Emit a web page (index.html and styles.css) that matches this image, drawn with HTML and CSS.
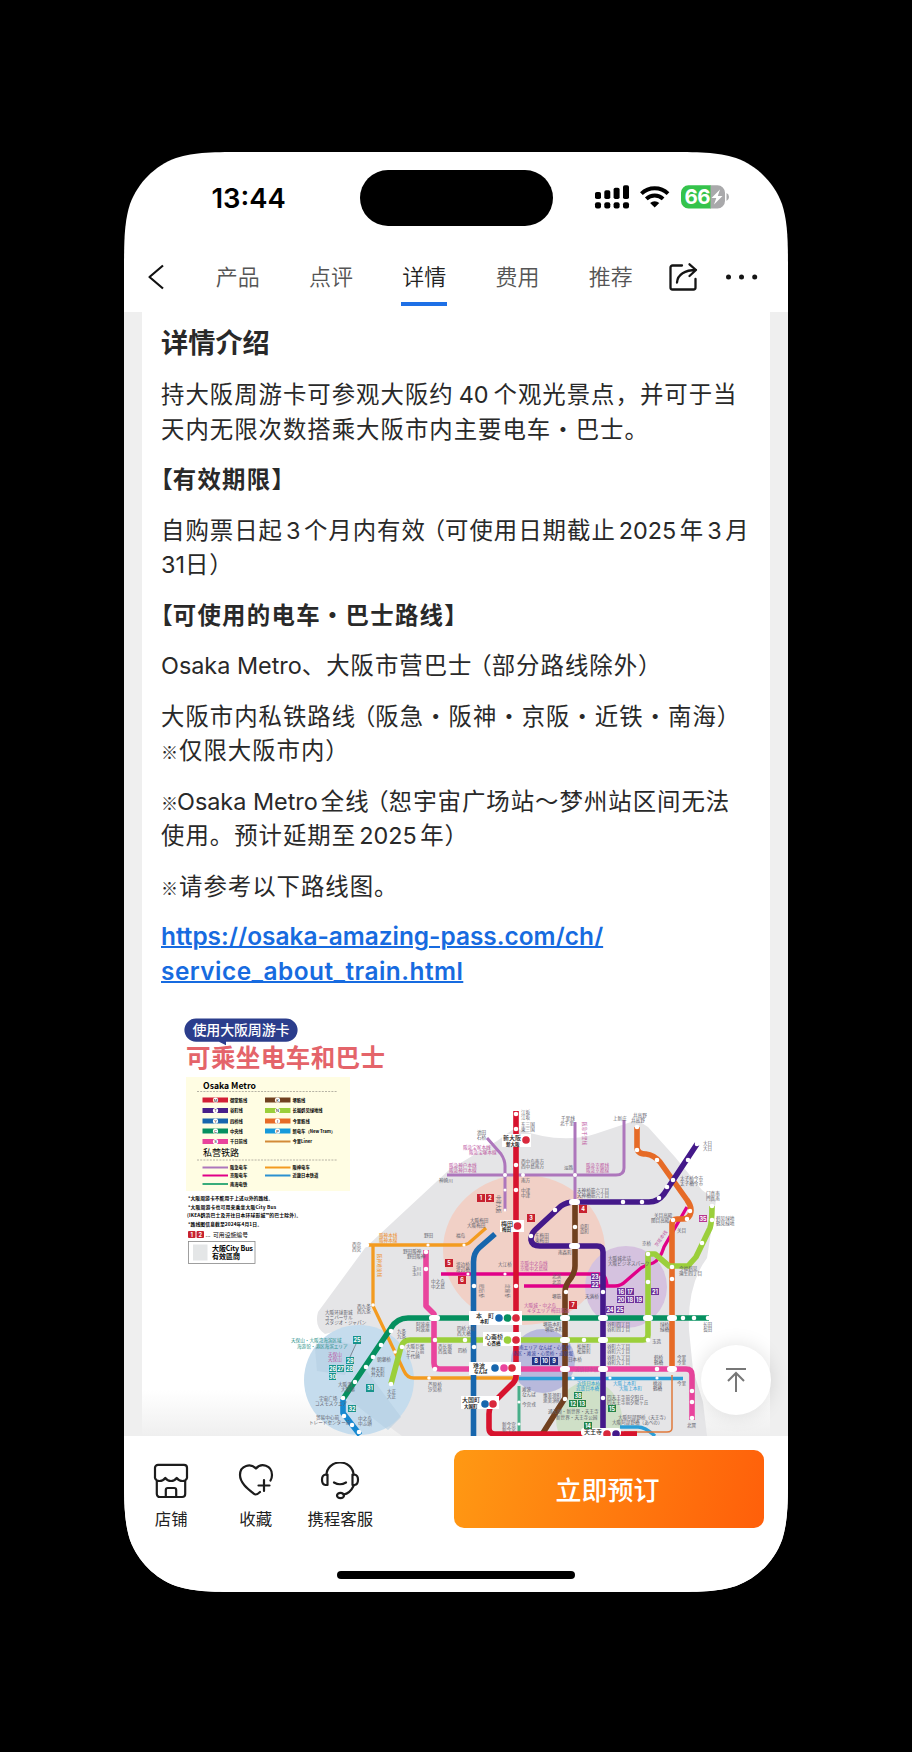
FILE: index.html
```html
<!DOCTYPE html>
<html lang="zh-CN">
<head>
<meta charset="utf-8">
<title>详情</title>
<link rel="stylesheet" href="styles.css">
</head>
<body>
<main class="phone">
  <header class="status">
    <span class="time">13:44</span>
    <span class="island"></span>
    <svg class="signals" viewBox="0 0 138 26" width="138" height="26">
      <g fill="#000">
        <rect x="1" y="8" width="6" height="7" rx="1.8"/><rect x="10.300" y="6.300" width="6" height="8.700" rx="1.8"/><rect x="19.600" y="3.800" width="6" height="11.200" rx="1.8"/><rect x="29" y="1.300" width="6" height="13.700" rx="1.8"/>
        <rect x="1" y="18.300" width="6" height="6.200" rx="2"/><rect x="10.300" y="18.300" width="6" height="6.200" rx="2"/><rect x="19.600" y="18.300" width="6" height="6.200" rx="2"/><rect x="29" y="18.300" width="6" height="6.200" rx="2"/>
        <path d="M60.700 23.500l-4.600-4.500a7 7 0 0 1 9.200 0z"/>
      </g>
      <g fill="none" stroke="#000" stroke-width="3.900"><path d="M47.400 9.600a19.200 19.200 0 0 1 26.600 0"/><path d="M52.300 14.900a12.200 12.200 0 0 1 16.800 0"/></g>
      <path d="M94.500 1.300H117V24.500H94.500a7.500 7.500 0 0 1-7.500-7.500V8.800a7.500 7.500 0 0 1 7.500-7.500z" fill="#35c34c"/>
      <path d="M116.500 1.300h7a7.500 7.500 0 0 1 7.500 7.500V17a7.500 7.500 0 0 1-7.500 7.500h-7z" fill="#a9a9ab"/>
      <path d="M132.500 9q2.500 1.200 2.500 4t-2.500 4z" fill="#a9a9ab"/>
      <text x="90.500" y="20" class="batt" textLength="26">66</text>
      <path d="M126 5.500l-8.500 8.500h4.800l-2.300 6.500 8.500-8.600h-4.700z" fill="#fff"/>
    </svg>
  </header>
  <nav class="nav">
    <svg class="back" viewBox="0 0 18 28" width="18" height="28"><path d="M16 2.500L2.500 14 16 25.500" fill="none" stroke="#111" stroke-width="2.200" stroke-linejoin="round"/></svg>
    <div class="tabs"><span>产品</span><span>点评</span><span class="active">详情</span><span>费用</span><span>推荐</span></div>
    <svg class="share" viewBox="0 0 30 30" width="30" height="30" fill="none" stroke="#151515" stroke-width="2.300" stroke-linecap="round" stroke-linejoin="round"><path d="M14 3.500H4.500a2 2 0 0 0-2 2v20a2 2 0 0 0 2 2h21a2 2 0 0 0 2-2V17"/><path d="M9 20.500c.5-8 8-12.500 19-12.500M21.500 2.300l6.500 5.700-6.500 6"/></svg>
    <svg class="more" viewBox="0 0 34 8" width="34" height="8" fill="#151515"><circle cx="4.500" cy="4" r="2.500"/><circle cx="17.500" cy="4" r="2.500"/><circle cx="30.700" cy="4" r="2.500"/></svg>
  </nav>
  <section class="scroll">
    <article class="card">
      <div class="copy">
        <h1>详情介绍</h1>
        <p>持大阪周游卡可参观大阪约<span class="num wide">40</span>个观光景点，并可于当<br>天内无限次数搭乘大阪市内主要电车・巴士。</p>
        <p><b><span class="br">【</span>有效期限<span class="br">】</span></b></p>
        <p>自购票日起<span class="num">3</span>个月内有效<span class="open">（</span>可使用日期截止<span class="num">2025</span>年<span class="num">3</span>月<br><span class="lat">31</span>日<span class="close">）</span></p>
        <p><b><span class="br">【</span>可使用的电车・巴士路线<span class="br">】</span></b></p>
        <p><span class="lat">Osaka Metro</span>、大阪市营巴士<span class="open">（</span>部分路线除外<span class="close">）</span></p>
        <p>大阪市内私铁路线<span class="open">（</span>阪急・阪神・京阪・近铁・南海<span class="close">）</span><br><span class="mark">※</span>仅限大阪市内<span class="close">）</span></p>
        <p><span class="mark tight">※</span><span class="lat">Osaka Metro</span><span class="after">全</span>线<span class="open">（</span>恕宇宙广场站～梦州站区间无法<br>使用。预计延期至<span class="num">2025</span>年<span class="close">）</span></p>
        <p><span class="mark">※</span>请参考以下路线图。</p>
        <p class="link"><a>https://osaka-amazing-pass.com/ch/<br><span class="second">service_about_train.html</span></a></p>
      </div>
      <svg class="map" viewBox="142 1000 628 436" width="628" height="436">
        <defs><linearGradient id="base" x1="0" y1="0" x2="0" y2="1"><stop offset="0" stop-color="#fff"/><stop offset="1" stop-color="#efefef"/></linearGradient></defs>
        <rect x="142" y="1390" width="628" height="46" fill="url(#base)"/>
        <!-- land and visitor zones -->
        <path d="M318 1312L365 1248L449 1170L497 1141L515 1128Q560 1145 595 1134L637 1120L648 1127L675 1157L702 1190L716 1200L707 1258Q687 1285 689 1330L693 1370L703 1402L707 1436H402L380 1420L350 1328L325 1334Q314 1327 318 1312Z" fill="#e5e5e7"/>
        <ellipse cx="524" cy="1250" rx="81" ry="75" fill="#f1d0c6"/>
        <circle cx="626" cy="1287" r="41" fill="#d5c2df"/>
        <circle cx="543" cy="1361" r="32" fill="#b8b9dc"/>
        <ellipse cx="589" cy="1419" rx="33" ry="38" fill="#cfe0c7"/>
        <circle cx="359" cy="1380" r="55" fill="#c5dced"/>
        <path d="M315 1348l18-8 22 5-10 30-28-4zM366 1370l35 47-13 13-45-35z" fill="#b4cee3" opacity=".6"/>
        <!-- private railways -->
        <g fill="none" stroke="#ad76bc" stroke-width="3"><path d="M447 1175H616Q624 1175 624 1168V1120M575 1122V1202M487 1138L501 1154Q505 1160 505 1166V1211"/></g>
        <path d="M519 1386V1436" fill="none" stroke="#48ae89" stroke-width="3"/>
        <path d="M441 1274H600Q606 1274 607 1286M524 1286H615Q621 1286 626 1281L641 1268Q646 1265 653 1263Q660 1260 664 1247L687 1207" fill="none" stroke="#e00088" stroke-width="3.300"/>
        <path d="M486 1228L469 1243Q466 1245 460 1245H366M373 1245V1306L404 1371Q407 1378 414 1378H519" fill="none" stroke="#f39b20" stroke-width="3.300"/>
        <path d="M519 1378.500H683M620 1427H638Q645 1427 655 1436" fill="none" stroke="#2b9ed8" stroke-width="3.300"/>
        <path d="M672 1375V1428Q672 1432 667 1432H624" fill="none" stroke="#df7a3d" stroke-width="1.500"/>
        <!-- metro lines -->
        <g fill="none" stroke-width="5.600" stroke-linejoin="round">
          <path d="M637 1127V1147Q637 1154 646 1154Q654 1155 660 1162L687 1200Q693 1208 690 1215Q688 1219 683 1219H677Q672 1219 672 1224V1372" stroke="#e66b27"/>
          <path d="M391 1384L401 1347Q403 1340 410 1340H643Q648 1340 648 1335V1254H655L669 1266H688L696 1257L710 1228Q712 1222 712 1206" stroke="#9bcf3b"/>
          <path d="M426 1250V1306L434 1314V1363Q434 1369 440 1369H686Q692 1369 692 1375V1420" stroke="#e9449d"/>
          <path d="M343 1399L391 1328Q397 1318 408 1318H709" stroke="#05905f"/>
          <path d="M343 1399V1413L360 1435" stroke="#1689d1"/>
          <path d="M495 1234L479 1248Q473.500 1253 473.500 1262V1436" stroke="#1766ad"/>
          <path d="M575 1204V1266Q575 1272 571 1278Q565 1285 565 1292V1398L541 1436" stroke="#70401f"/>
          <path d="M697 1144L664 1194Q658 1202 649 1202H574Q567 1202 561 1206L535 1230Q531 1234 531 1240Q532 1246 540 1246H597Q603 1246 603 1252V1436" stroke="#44198a"/>
          <path d="M516 1111V1376Q516 1381 511 1385L494 1402Q489 1407 489 1414V1428Q489 1434 495 1434H637" stroke="#d7132e"/>
        </g>
        <!-- stations -->
        <g stroke="#fff" stroke-width="4.600" stroke-linecap="round" fill="none">
          <path d="M516 1114h0M516 1129h0M516 1165h0M516 1190h0M516 1286h0M637 1127h0M637 1150h0M657 1160h0M673 1180h0M690 1211h0M687 1219h0M673 1220h0M672 1267h0M672 1279h0M688 1160h0M697 1144h0M667 1187h0M659 1198h0M642 1202h0M623 1202h0M555 1210h0M531 1236h0M575 1227h0M566 1292h0M565 1399h0M603 1292h0M603 1398h0M648 1282h0M648 1254h0M702 1243h0M712 1220h0M712 1206h0M648 1340h0M584 1340h0M683 1318h0M694 1318h0M708 1318h0M426 1252h0M426 1269h0M692 1391h0M692 1402h0M692 1418h0M657 1369h0M367 1245h0M391 1331h0M381 1345h0M373 1357h0M366 1367h0M355 1382h0M343 1398h0M402 1347h0M391 1384h0M465 1340h0M474 1347h0M435 1340h0M435 1369h0M474 1286h0M344 1416h0M352 1425h0M359 1432h0"/>
          <path d="M572 1202h5M572 1246h5M432 1318h5M563 1318h4M601 1318h4M646 1318h4M670 1318h4M563 1340h4M601 1340h4M563 1369h4M601 1369h4M670 1369h4" stroke-width="6"/>
        </g>
        <g fill="#fff"><circle cx="505" cy="1175" r="2"/><circle cx="523" cy="1175" r="2"/><circle cx="575" cy="1175" r="2"/><circle cx="505" cy="1190" r="1.500"/><circle cx="505" cy="1210" r="1.500"/><circle cx="428" cy="1245" r="1.600"/><circle cx="464" cy="1245" r="1.600"/><circle cx="468" cy="1274" r="1.600"/><circle cx="505" cy="1274" r="1.600"/><circle cx="373" cy="1305" r="1.800"/><circle cx="395" cy="1352" r="1.800"/><circle cx="429" cy="1378" r="1.800"/><circle cx="573" cy="1378" r="1.600"/><circle cx="610" cy="1378" r="1.600"/><circle cx="657" cy="1378" r="1.600"/><circle cx="519" cy="1402" r="1.600"/><circle cx="519" cy="1424" r="1.600"/>
          <rect x="502" y="1134" width="29" height="13"/><rect x="500" y="1220" width="24" height="12"/><rect x="469" y="1311" width="53" height="14"/><rect x="483" y="1332" width="38" height="14"/><rect x="469" y="1362" width="52" height="13"/><rect x="461" y="1396" width="38" height="13"/><rect x="581" y="1428" width="40" height="8" rx="3"/></g>
        <g class="hub"><text x="503" y="1140">新大阪</text><text x="501" y="1226">梅田</text><text x="476" y="1318">本　町</text><text x="485" y="1339">心斋桥</text><text x="473" y="1368">难波</text><text x="462" y="1402">大国町</text><text x="584" y="1434">天王寺</text></g>
        <g class="hub-sub"><text x="506" y="1145.500">新大阪</text><text x="502" y="1231">梅田</text><text x="480" y="1323">本町</text><text x="487" y="1344.500">心斎橋</text><text x="474" y="1373">なんば</text><text x="464" y="1407.500">大国町</text></g>
        <g stroke-width="7.600" stroke-linecap="round"><path d="M526 1140h0M517.500 1226h0M516 1318h0M516 1340h0M512 1368h0M493 1404h0M607 1434h0" stroke="#d9283c"/><path d="M499 1318h0M495 1368h0M485 1404h0" stroke="#1766ad"/><path d="M507.500 1318h0" stroke="#05905f"/><path d="M507.500 1340h0" stroke="#9bcf3b"/><path d="M504 1368h0" stroke="#e9449d"/><path d="M616 1434h0" stroke="#44198a"/></g>
        <g class="tiny">
          <text x="521" y="1114">江坂</text><text x="521" y="1118.500">江坂</text><text x="521" y="1126">东三国</text><text x="521" y="1130.500">東三国</text><text x="477" y="1134">池田</text><text x="477" y="1138.500">石桥</text><text x="521" y="1163">西中岛南方</text><text x="521" y="1167.500">西中島南方</text><text x="439" y="1182">神崎川</text><text x="521" y="1182">南方</text><text x="521" y="1192">中津</text><text x="521" y="1197">中津</text><text x="470" y="1222">大阪梅田</text><text x="467" y="1227">大阪梅田</text><text x="424" y="1237">野田</text><text x="456" y="1237">福岛</text><text x="561" y="1120">千里线</text><text x="560" y="1125">北千里</text><text x="564" y="1169">淡路</text><text x="633" y="1117">井高野</text><text x="631" y="1122">井高野</text><text x="613" y="1120">上新庄</text><text x="703" y="1145">大日</text><text x="703" y="1149.500">大日</text><text x="680" y="1180">太子桥今市</text><text x="680" y="1185">太子橋今市</text><text x="577" y="1192">天神桥筋六丁目</text><text x="577" y="1197">天神橋筋六丁目</text><text x="580" y="1228">扇町</text><text x="580" y="1233">扇町</text><text x="558" y="1254">南森町</text><text x="535" y="1237">东梅田</text><text x="535" y="1242">東梅田</text><text x="706" y="1195">门真南</text><text x="706" y="1200">門真南</text><text x="716" y="1220">鹤见绿地</text><text x="716" y="1225">鶴見緑地</text><text x="654" y="1217">关目高殿</text><text x="651" y="1222">関目高殿</text><text x="677" y="1232">关目</text><text x="642" y="1245">京桥</text><text x="608" y="1260">大阪城北诘</text><text x="608" y="1265">大阪ビジネスパーク</text><text x="679" y="1270">今福鹤见</text><text x="679" y="1275">蒲生四丁目</text><text x="352" y="1246">西宫</text><text x="352" y="1251">西宮</text><text x="403" y="1253">野田阪神</text><text x="407" y="1258">野田阪神</text><text x="412" y="1270">玉川</text><text x="412" y="1275">玉川</text><text x="431" y="1283">中之岛</text><text x="431" y="1288">中之島</text><text x="456" y="1266">渡边桥</text><text x="456" y="1271">渡辺橋</text><text x="498" y="1266">大江桥</text><text x="552" y="1278">北滨</text><text x="552" y="1284">北浜</text><text x="552" y="1298">堺筋</text><text x="585" y="1298">天满桥</text><text x="325" y="1314">大阪环球影城</text><text x="325" y="1319">ユニバーサル</text><text x="325" y="1324">スタジオ・ジャパン</text><text x="357" y="1308">西九条</text><text x="357" y="1313">西九条</text><text x="397" y="1333">九条</text><text x="397" y="1338">九条</text><text x="416" y="1326">阿波座</text><text x="416" y="1331">阿波座</text><text x="406" y="1348">大阪巨蛋</text><text x="406" y="1353">ドーム前</text><text x="406" y="1358">千代崎</text><text x="438" y="1348">西长堀</text><text x="438" y="1353">西長堀</text><text x="457" y="1330">四桥大桥</text><text x="457" y="1335">西大橋</text><text x="458" y="1352">四桥</text><text x="371" y="1371">弁天町</text><text x="371" y="1376">弁天町</text><text x="377" y="1361">朝潮桥</text><text x="338" y="1386">大阪港</text><text x="341" y="1391">大阪港</text><text x="319" y="1400">宇宙广场</text><text x="315" y="1405">コスモスクエア</text><text x="316" y="1419">贸易中心前</text><text x="309" y="1424">トレードセンター前</text><text x="358" y="1420">中之岛</text><text x="358" y="1425">中ふ頭</text><text x="387" y="1393">大正</text><text x="387" y="1398">大正</text><text x="428" y="1386">芦原桥</text><text x="428" y="1391">汐见桥</text><text x="543" y="1326">堺筋本町</text><text x="545" y="1331">堺筋本町</text><text x="607" y="1326">谷町四丁目</text><text x="607" y="1331">谷町四丁目</text><text x="660" y="1326">绿桥</text><text x="660" y="1331">緑橋</text><text x="703" y="1326">长田</text><text x="703" y="1331">長田</text><text x="577" y="1348">松屋町</text><text x="577" y="1353">松屋町</text><text x="607" y="1348">谷町六丁目</text><text x="607" y="1353">谷町六丁目</text><text x="652" y="1343">玉造</text><text x="607" y="1359">谷町九丁目</text><text x="607" y="1364">谷町九丁目</text><text x="654" y="1359">鹤桥</text><text x="654" y="1364">鶴橋</text><text x="677" y="1359">今里</text><text x="677" y="1364">今里</text><text x="653" y="1385">桃谷</text><text x="653" y="1390">鶴橋</text><text x="677" y="1385">今里</text><text x="522" y="1391">难波</text><text x="522" y="1396">なんば</text><text x="522" y="1406">今宫戎</text><text x="543" y="1397">惠美须町</text><text x="543" y="1402">恵美須町</text><text x="607" y="1399">四天王寺前夕阳丘</text><text x="607" y="1404">四天王寺前夕陽ヶ丘</text><text x="502" y="1426">新今宫</text><text x="502" y="1431">新今宮</text><text x="618" y="1419">大阪阿部野桥（天王寺）</text><text x="612" y="1424">大阪阿部野橋（あべの）</text><text x="687" y="1427">北巽</text><text x="548" y="1413">通天阁・新世界・天王寺</text><text x="556" y="1418.500">新世界・天王寺公园</text><text x="568" y="1361">日本桥</text>
          <g transform="rotate(90 480 1284)"><text x="480" y="1284">肥后桥</text></g><g transform="rotate(90 506 1284)"><text x="506" y="1284">淀屋桥</text></g><g transform="rotate(90 497 1195)"><text x="497" y="1195">中津大阪</text></g>
        </g>
        <g class="tiny accent"><text x="449" y="1167">阪急神户本线</text><text x="449" y="1171.500">阪急神戸本線</text><text x="463" y="1149">阪急宝冢本线</text><text x="469" y="1154">阪急宝塚本線</text><text x="586" y="1167">阪急京都线</text><text x="586" y="1171.500">阪急京都線</text><text x="520" y="1265">京阪中之岛线</text><text x="520" y="1270">京阪中之島線</text><text x="524" y="1307">大阪城・中之岛</text><text x="527" y="1312">キタエリア 梅田周边</text><text x="328" y="1356">天保山</text><text x="328" y="1361">天保山</text><text x="575" y="1371">近铁日本桥</text><g transform="rotate(90 583 1122)"><text x="583" y="1122">阪急千里线</text></g><g transform="rotate(-55 657 1247)"><text x="657" y="1247">京阪本线</text></g></g>
        <g class="tiny teal"><text x="291" y="1342">天保山・大阪湾海滨区域</text><text x="297" y="1348">海游馆・港区海滨エリア</text></g>
        <g class="tiny navy"><text x="519" y="1349">南エリア なんば・心斋桥</text><text x="513" y="1354.500">南区・难波・心斋桥・道顿堀</text></g>
        <g class="tiny sky"><text x="577" y="1385">近铁日本桥</text><text x="576" y="1390">近鉄日本橋</text><text x="613" y="1385">大阪上本町</text><text x="619" y="1390">大阪上本町</text></g>
        <g class="tiny orange"><text x="379" y="1237">阪神本线</text><text x="379" y="1241.500">阪神本線</text><g transform="rotate(90 378 1254)"><text x="378" y="1254">阪神难波线</text></g></g>
        <g class="plates">
          <g fill="#c72230"><rect x="477" y="1194" width="8" height="8"/><rect x="486" y="1194" width="8" height="8"/><rect x="527" y="1214" width="8" height="8"/><rect x="579" y="1205" width="8" height="8"/><rect x="445" y="1259" width="8" height="8"/><rect x="458" y="1276" width="8" height="8"/><rect x="569" y="1301" width="8" height="8"/></g>
          <g fill="#6e329b"><rect x="591" y="1273" width="8" height="7"/><rect x="591" y="1281" width="8" height="7"/><rect x="617" y="1288" width="8" height="7"/><rect x="626" y="1288" width="8" height="7"/><rect x="617" y="1296" width="8" height="7"/><rect x="626" y="1296" width="8" height="7"/><rect x="635" y="1296" width="8" height="7"/><rect x="651" y="1288" width="8" height="7"/><rect x="606" y="1306" width="8" height="7"/><rect x="616" y="1306" width="8" height="7"/></g>
          <g fill="#243483"><rect x="532" y="1357" width="8" height="8"/><rect x="541" y="1357" width="8" height="8"/><rect x="550" y="1357" width="8" height="8"/></g>
          <path d="M356 1344L350 1357" stroke="#55565d" stroke-width=".6"/>
          <g fill="#18938b"><rect x="353" y="1336" width="8" height="8"/><rect x="346" y="1357" width="8" height="7"/><rect x="329" y="1365" width="7" height="7"/><rect x="337" y="1365" width="7" height="7"/><rect x="346" y="1365" width="7" height="7"/><rect x="329" y="1373" width="7" height="7"/><rect x="366" y="1384" width="8" height="8"/><rect x="348" y="1405" width="8" height="7"/></g>
          <g fill="#218347"><rect x="574" y="1392" width="8" height="7"/><rect x="569" y="1400" width="8" height="7"/><rect x="578" y="1400" width="8" height="7"/><rect x="608" y="1405" width="8" height="7"/><rect x="584" y="1422" width="8" height="7"/></g>
          <rect x="699" y="1215" width="8" height="7" fill="#b8368f"/>
          <g class="plate"><text x="481" y="1200.300">1</text><text x="490" y="1200.300">2</text><text x="531" y="1220.300">3</text><text x="583" y="1211.300">4</text><text x="449" y="1265.300">5</text><text x="462" y="1282.300">6</text><text x="573" y="1307.300">7</text><text x="595" y="1279">23</text><text x="595" y="1287">22</text><text x="621" y="1294">16</text><text x="630" y="1294">17</text><text x="621" y="1302">20</text><text x="630" y="1302">18</text><text x="639" y="1302">19</text><text x="655" y="1294">21</text><text x="610" y="1312">24</text><text x="620" y="1312">25</text><text x="536" y="1363.300">8</text><text x="545" y="1363.300">10</text><text x="554" y="1363.300">9</text><text x="357" y="1342">25</text><text x="350" y="1363">29</text><text x="332.500" y="1371">26</text><text x="340.500" y="1371">27</text><text x="349.500" y="1371">28</text><text x="332.500" y="1379">30</text><text x="370" y="1390">31</text><text x="352" y="1411">32</text><text x="578" y="1398">38</text><text x="573" y="1406">12</text><text x="582" y="1406">13</text><text x="612" y="1411">15</text><text x="588" y="1428">14</text><text x="703" y="1221">35</text></g>
        </g>
        <!-- title -->
        <path d="M196 1018.500h90a11.500 11.500 0 0 1 0 23.200h-60v3.500l-7-3.500h-23a11.500 11.500 0 0 1 0-23.200z" fill="#2b3d8c"/>
        <text x="192.500" y="1034.500" class="pill-text" textLength="97">使用大阪周游卡</text>
        <text x="186" y="1066.500" class="map-title" textLength="199">可乘坐电车和巴士</text>
        <!-- legend -->
        <rect x="186" y="1077" width="164" height="114" fill="#fffde3"/>
        <text x="203" y="1088.500" class="legend-title" textLength="53" lengthAdjust="spacingAndGlyphs">Osaka Metro</text>
        <path d="M197 1091.500h140M197 1160h140" stroke="#a3a094" stroke-width=".8" stroke-dasharray="2 1.200"/>
        <g stroke-width="5"><path d="M202.500 1100h25.500" stroke="#d31f35"/><path d="M202.500 1110.500h25.500" stroke="#47208a"/><path d="M202.500 1121h25.500" stroke="#1766ad"/><path d="M202.500 1131h25.500" stroke="#05905f"/><path d="M202.500 1141.500h25.500" stroke="#e9449d"/><path d="M265 1100h25.500" stroke="#70401f"/><path d="M265 1110.500h25.500" stroke="#9bcf3b"/><path d="M265 1121h25.500" stroke="#e66b27"/><path d="M265 1131h25.500" stroke="#169adb"/></g>
        <g stroke-width="2"><path d="M265 1141.500h25.500" stroke="#d28a38"/><path d="M202.500 1167.500h25.500" stroke="#ad76bc"/><path d="M202.500 1175.500h25.500" stroke="#e00088"/><path d="M202.500 1184h25.500" stroke="#39ad7b"/><path d="M265 1167.500h25.500" stroke="#f39b20"/><path d="M265 1175.500h25.500" stroke="#2b91d0"/></g>
        <g fill="#fff"><circle cx="215.500" cy="1100" r="2.600"/><circle cx="215.500" cy="1110.500" r="2.600"/><circle cx="215.500" cy="1121" r="2.600"/><circle cx="215.500" cy="1131" r="2.600"/><circle cx="215.500" cy="1141.500" r="2.600"/><circle cx="277.500" cy="1100" r="2.600"/><circle cx="277.500" cy="1110.500" r="2.600"/><circle cx="277.500" cy="1121" r="2.600"/><circle cx="277.500" cy="1131" r="2.600"/></g>
        <g class="codes"><text x="215.500" y="1101.500">M</text><text x="215.500" y="1112">T</text><text x="215.500" y="1122.500">Y</text><text x="215.500" y="1132.500">C</text><text x="215.500" y="1143">S</text><text x="277.500" y="1101.500">K</text><text x="277.500" y="1112">N</text><text x="277.500" y="1122.500">I</text><text x="277.500" y="1132.500">P</text></g>
        <g class="key"><text x="230" y="1101.600">御堂筋线</text><text x="230" y="1112">谷町线</text><text x="230" y="1122.500">四桥线</text><text x="230" y="1132.500">中央线</text><text x="230" y="1143">千日前线</text><text x="292.500" y="1101.600">堺筋线</text><text x="292.500" y="1112">长堀鹤见绿地线</text><text x="292.500" y="1122.500">今里筋线</text><text x="292.500" y="1132.500">新电车（New Tram）</text><text x="292.500" y="1143">今里Liner</text><text x="230" y="1169">阪急电车</text><text x="230" y="1177">京阪电车</text><text x="230" y="1185.500">南海电铁</text><text x="292.500" y="1169">阪神电车</text><text x="292.500" y="1177">近畿日本铁道</text></g>
        <text x="203" y="1156" class="legend-sub" textLength="36">私营铁路</text>
        <g class="note"><text x="188" y="1199.500" textLength="85">*大阪周游卡不能用于上述以外的路线。</text><text x="188" y="1209" textLength="88">*大阪周游卡也可用来乘坐大阪City Bus</text><text x="187" y="1216.500" textLength="114">(IKEA鹤浜巴士及开往日本环球影城™的巴士除外)。</text><text x="188" y="1225.500" textLength="74">*路线图信息截至2024年4月1日。</text></g>
        <rect x="188" y="1231" width="7.500" height="7" rx="1" fill="#c72230"/><rect x="196.500" y="1231" width="7.500" height="7" rx="1" fill="#c72230"/>
        <g class="plate"><text x="191.700" y="1236.700">1</text><text x="200.300" y="1236.700">2</text></g><text x="205.500" y="1237" class="number-note">...</text><text x="213" y="1237" class="number-note" textLength="35" lengthAdjust="spacingAndGlyphs">可用设施编号</text>
        <rect x="188.500" y="1241.500" width="66.500" height="22" fill="#fff" stroke="#888" stroke-width=".8"/><rect x="193" y="1244.500" width="14.500" height="16" fill="#e4e6e7"/>
        <text x="212" y="1250.700" class="bus" textLength="41">大阪City Bus</text><text x="212" y="1258.700" class="bus" textLength="28">有效區間</text>
      </svg>
    </article>
    <button class="top"><svg viewBox="0 0 24 28" width="24" height="28"><path d="M2 3h20M12 26V8M4 15l8-8 8 8" fill="none" stroke="#777" stroke-width="2"/></svg></button>
  </section>
  <footer class="bottom">
    <div class="actions">
      <div class="tool"><svg viewBox="0 0 36 36" width="36" height="36"><path d="M5 1.800h26a3 3 0 0 1 3 3V15q-1 3-4.500 3-3.500 0-5.800-3-2.200 3-5.700 3t-5.700-3Q10 18 6.500 18 3 18 2 15V4.800a3 3 0 0 1 3-3zM3.800 17.500V31a3 3 0 0 0 3 3h22.400a3 3 0 0 0 3-3V17.500M12.800 34v-7a2 2 0 0 1 2-2h6.400a2 2 0 0 1 2 2v7"/></svg><span>店铺</span></div>
      <div class="tool"><svg viewBox="0 0 36 36" width="36" height="36"><path d="M22 29q-4 3.800-6 1.800C10 26 2 20 2 12 2 2 13 0 18 5.500 23-.5 34 2 34 12q0 3-1.500 5.500M26 17v11M20.500 22.500h11"/></svg><span>收藏</span></div>
      <div class="tool headset"><svg viewBox="0 0 40 38" width="40" height="38"><path d="M6.500 13A13.500 12.500 0 0 1 33.500 13M33.500 24Q30 31.500 23.500 32.500M14 20.500q6 3.500 12 0M7.500 12.500v10.500H5.500q-3.500-.5-3.500-5.200t3.500-5.300zM32.500 12.500v10.500H34.500q3.500-.5 3.500-5.200t-3.500-5.300z"/><ellipse cx="20.500" cy="33.500" rx="3.500" ry="2.700"/></svg><span>携程客服</span></div>
    </div>
    <button class="book">立即预订</button>
    <i class="home"></i>
  </footer>
</main>
</body>
</html>
```
FILE: styles.css
```css
* { box-sizing: border-box; }
body { margin: 0; min-height: 1752px; background: #000; padding: 152px 124px 160px; font-family: "Noto Sans CJK SC", sans-serif; color: #292929; }
button { border: 0; padding: 0; font-family: inherit; }
.phone { width: 664px; height: 1440px; background: #fff; display: flex; flex-direction: column; overflow: hidden;
  clip-path: path("M125 0H539C575 0 593 0 612 6C633.400 13.900 650.100 30.600 658 52C664 71 664 89 664 125V1315C664 1351 664 1369 658 1388C650.100 1409.400 633.400 1426.100 612 1434C593 1440 575 1440 539 1440H125C89 1440 71 1440 52 1434C30.600 1426.100 13.900 1409.400 6 1388C0 1369 0 1351 0 1315V125C0 89 0 71 6 52C13.900 30.600 30.600 13.900 52 6C71 0 89 0 125 0Z"); }
.status { height: 90px; padding: 18px 55px 0 87px; display: grid; grid-template-columns: 148.500px 193px 1fr; flex: none; }
.time { font: 600 27.400px/33px Inter, sans-serif; padding: 11.500px 0 0 .5px; color: #000; }
.island { height: 56px; border-radius: 28px; background: #000; }
.signals { margin: 14px 0 0 41.500px; }
.batt { font: 700 20.500px Inter, sans-serif; fill: #fff; }
.nav { height: 70px; flex: none; display: flex; align-items: flex-start; padding: 0 0 0 23px; }
.back { margin-top: 21px; }
.tabs { display: flex; margin-left: 26px; }
.tabs span { width: 93.300px; height: 64px; display: flex; justify-content: center; align-items: center; padding-top: 1px; font-size: 22px; font-weight: 350; color: #555; position: relative; }
.tabs .active { color: #222; }
.tabs .active::after { content: ""; position: absolute; width: 46px; height: 4px; background: #1e70e6; top: 60px; }
.share { margin: 20px 0 0 11px; }
.more { margin: 31px 0 0 26px; }
.scroll { height: 1124px; flex: none; background: #efefef; padding: 0 18px; position: relative; }
.card { height: 1124px; background: #fff; overflow: hidden; display: flex; flex-direction: column; }
.copy { height: 688px; padding: 11px 0 0 19px; flex: none; white-space: nowrap; }
h1 { font-size: 27.200px; line-height: 36px; font-weight: 700; margin: 0 0 16.900px; }
p { font-size: 23.400px; line-height: 34.700px; letter-spacing: 1px; margin: 0 0 15.750px; }
b { font-weight: 700; letter-spacing: 1.300px; }
p span { line-height: 0; }
.lat, .num { font-family: Inter, sans-serif; letter-spacing: 0; }
.num { margin: 0 3.500px 0 3px; }
.num.wide { margin: 0 5px; }
.after { margin-left: 3px; }
.open, .close, .br { font-feature-settings: "halt"; letter-spacing: 0; }
.open { margin-left: 7.500px; }
.mark { font-size: 17px; font-weight: 700; letter-spacing: 1px; }
.mark.tight { letter-spacing: -1px; }
.link { font: 600 24.400px/34.700px Inter, sans-serif; letter-spacing: 0; color: #176be0; text-decoration: underline; text-decoration-thickness: 2px; padding-top: .8px; }
.second { letter-spacing: .48px; }
.map { display: block; flex: none; }
.hub { font-size: 6px; fill: #222; font-weight: 500; }
.hub-sub { font-size: 4.500px; fill: #222; font-weight: 700; }
.tiny { font-size: 4.600px; fill: #60606a; }
.accent { fill: #bd559f; }
.teal { fill: #238f87; }
.orange { fill: #ee8b19; }
.navy { fill: #2f3c96; }
.sky { fill: #2b9ed8; }
.plate { font: 700 5.500px Inter, sans-serif; fill: #fff; text-anchor: middle; }
.pill-text { font-size: 14px; font-weight: 500; fill: #fff; }
.map-title { font-size: 24.500px; font-weight: 700; fill: #e4646a; }
.legend-title { font-size: 8.500px; font-weight: 700; }
.legend-sub { font-size: 9px; }
.key { font-size: 4.300px; font-weight: 700; }
.codes { font: 4px Inter, sans-serif; text-anchor: middle; }
.note { font-size: 4.800px; font-weight: 700; }
.number-note { font-size: 6px; }
.bus { font-size: 7px; font-weight: 700; }
.top { position: absolute; width: 70px; height: 70px; border-radius: 50%; background: #fff; right: 17px; bottom: 21px; box-shadow: 0 0 20px rgba(0,0,0,.12); display: grid; place-items: center; }
.bottom { height: 156px; flex: none; background: #fff; display: grid; grid-template-columns: 329.500px 310px; grid-template-rows: 121px 8px; padding-top: 14px; }
.actions { display: flex; padding: 13px 0 0 5px; align-items: flex-start; }
.tool { width: 84.500px; height: 69px; display: flex; flex-direction: column; align-items: center; justify-content: space-between; color: #222; }
.tool span { font-size: 16.400px; line-height: 28px; }
.tool svg { fill: none; stroke: #1c1c1c; stroke-width: 2.200; stroke-linejoin: round; stroke-linecap: round; }
.tool.headset svg { margin-top: -1px; }
.book { height: 78px; border-radius: 10px; background: linear-gradient(105deg, #ff9913, #ff5f0a); color: #fff; font-size: 26px; font-weight: 500; padding: 0 2px 2px 0; }
.home { grid-column: 1 / 3; height: 8px; width: 238px; margin-left: 213px; border-radius: 4px; background: #000; }
```
